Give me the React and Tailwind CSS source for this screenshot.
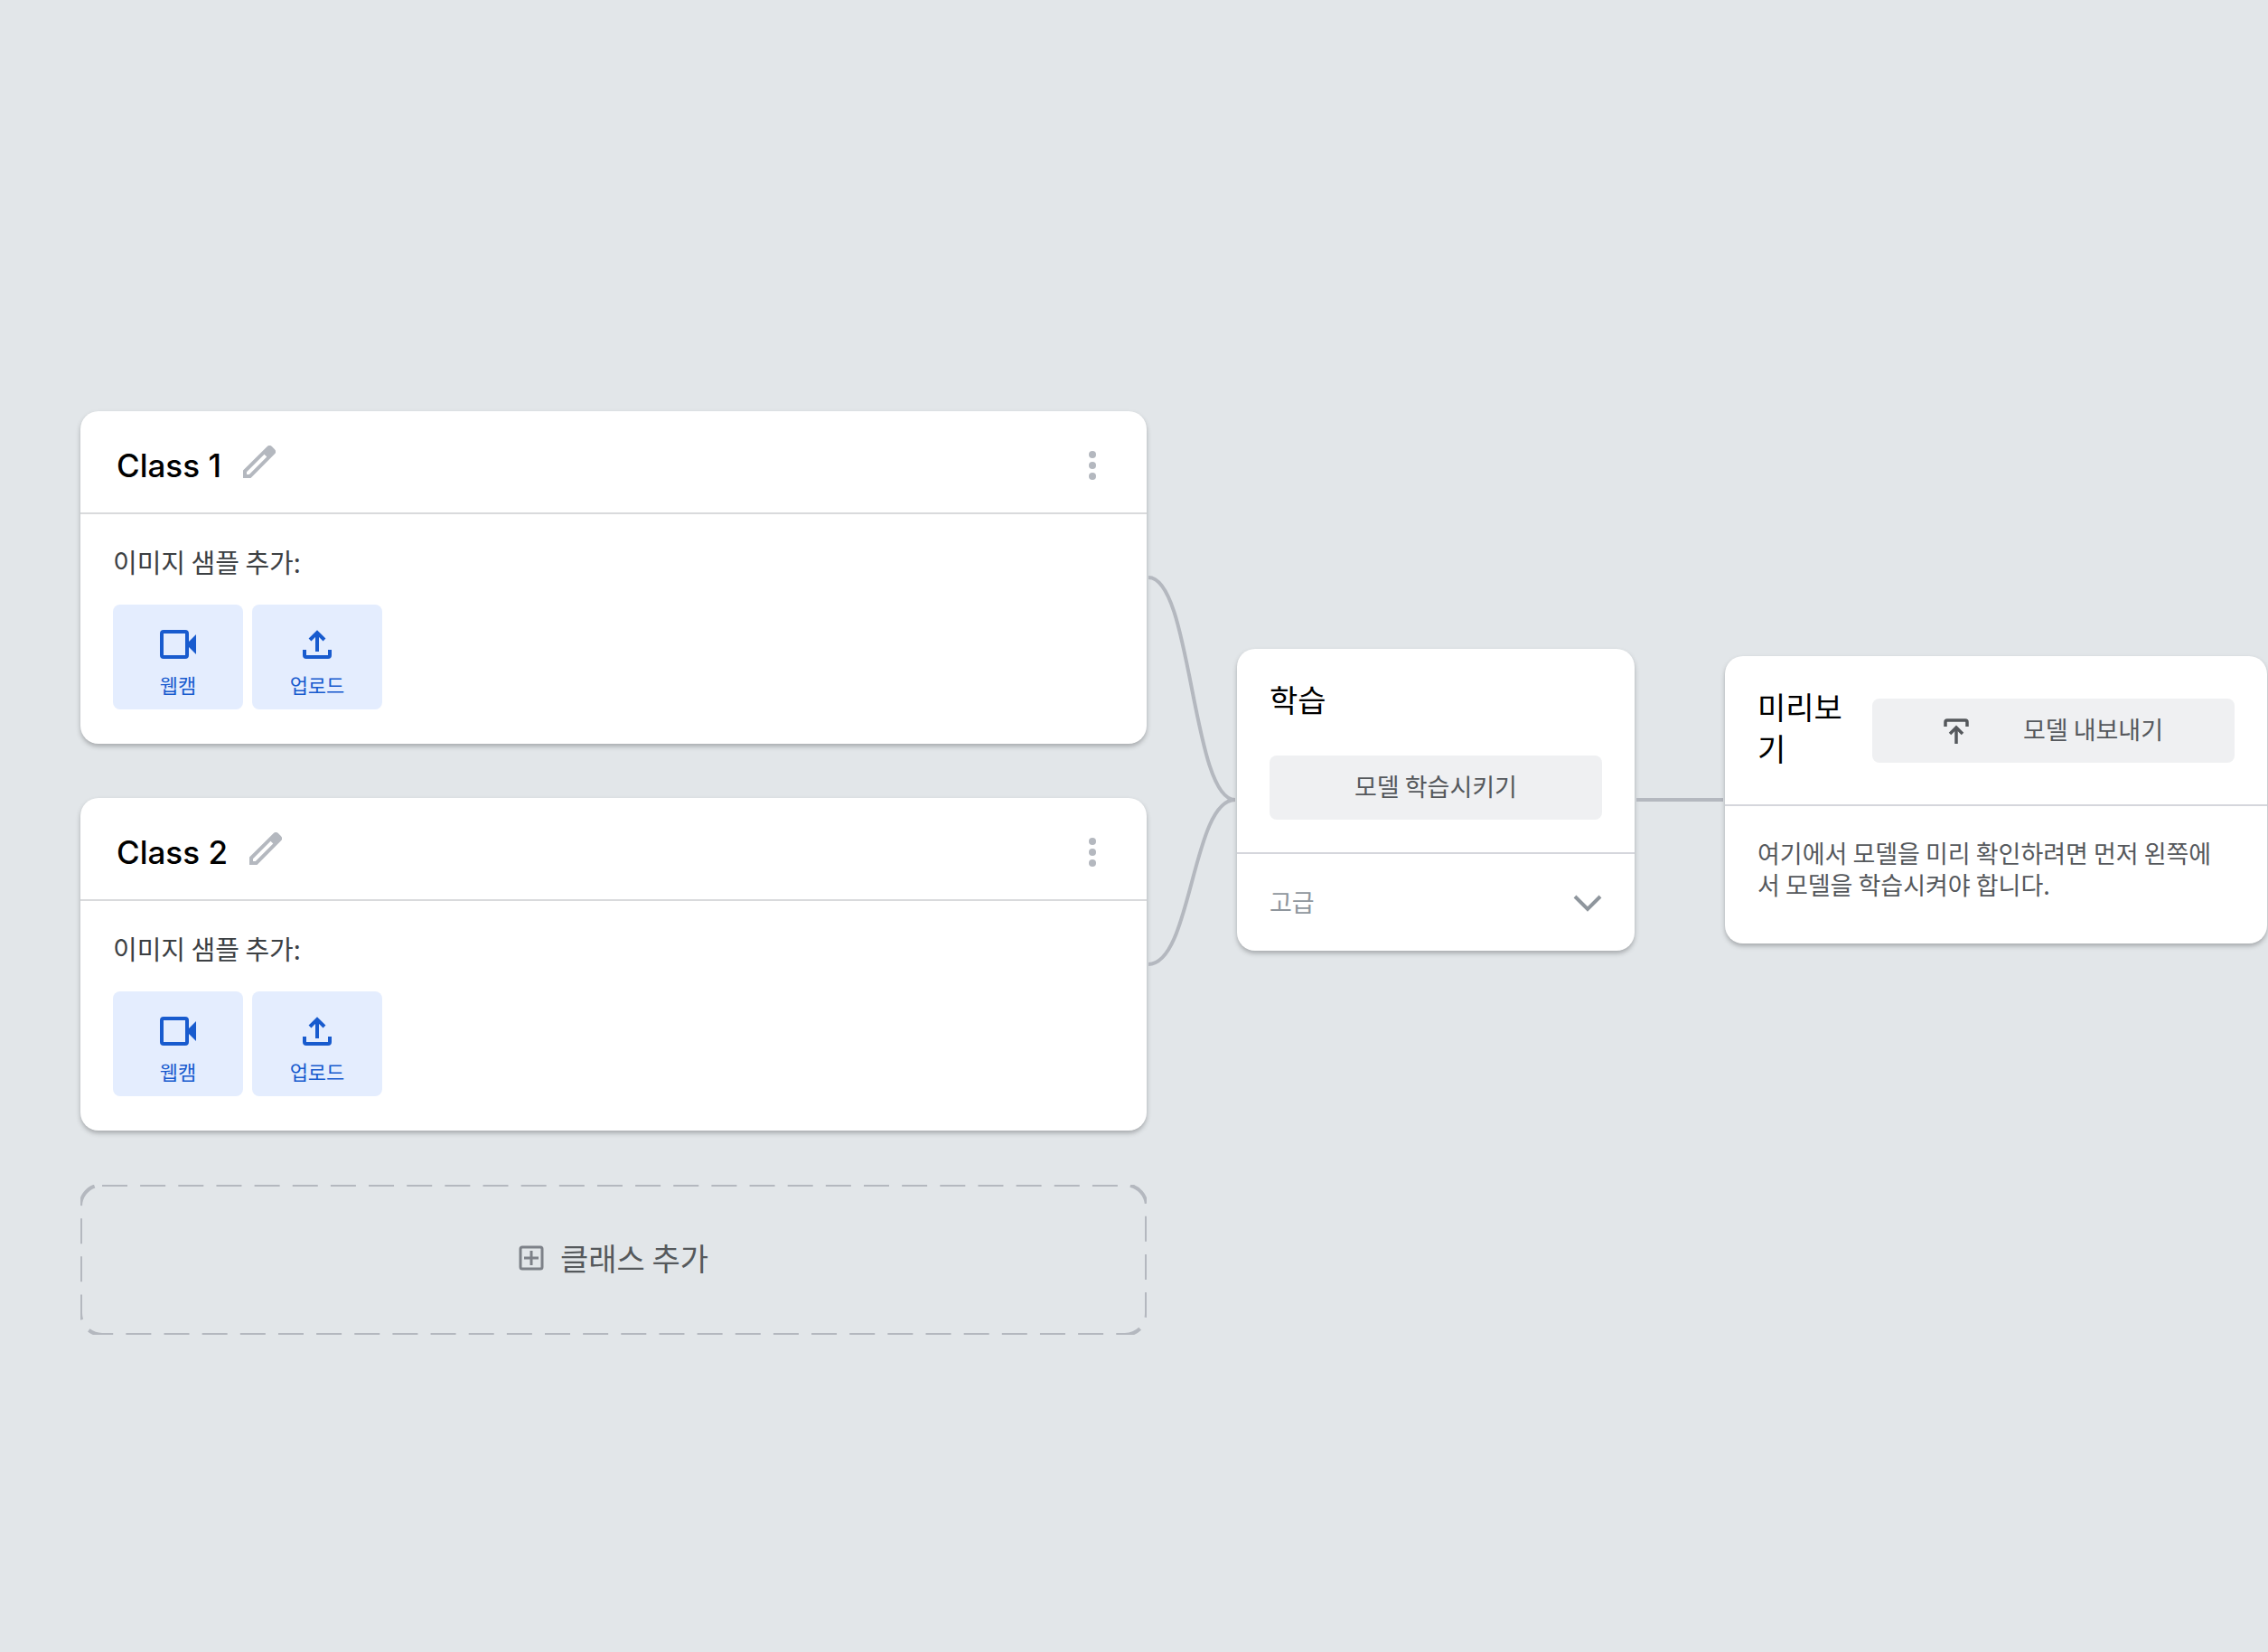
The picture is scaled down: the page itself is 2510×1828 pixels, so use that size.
const classes = [
  { id: 1, name: "Class 1" },
  { id: 2, name: "Class 2" },
];

function PencilIcon() {
  return (
    <svg width="36" height="36" viewBox="0 0 36 36" aria-hidden="true">
      <path
        fillRule="evenodd"
        fill="#b4b8bf"
        d="M0 27.500L26.500 1.200a4 4 0 0 1 5.600 0L34.800 3.900a4 4 0 0 1 0 5.600L8.500 36H0ZM4 29.200V32H6.800L26.300 12.500L23.500 9.700Z"
      />
    </svg>
  );
}

function MoreIcon() {
  return (
    <svg width="8" height="32" viewBox="0 0 8 32" fill="#b4b8bf" aria-hidden="true">
      <circle cx="4" cy="4" r="4" />
      <circle cx="4" cy="16" r="4" />
      <circle cx="4" cy="28" r="4" />
    </svg>
  );
}

function WebcamIcon() {
  return (
    <svg width="40" height="32" viewBox="0 0 40 32" aria-hidden="true">
      <rect x="2" y="2" width="28" height="28" rx="2" fill="none" stroke="#185bce" strokeWidth="4" />
      <path d="M31 14L40 5V27L31 18Z" fill="#185bce" />
    </svg>
  );
}

function UploadIcon() {
  return (
    <svg
      width="32"
      height="32"
      viewBox="0 0 32 32"
      fill="none"
      stroke="#185bce"
      strokeWidth="4"
      aria-hidden="true"
    >
      <path d="M2 22V28a2 2 0 0 0 2 2H28a2 2 0 0 0 2-2V22" />
      <path d="M16 24V4" />
      <path d="M8 11L16 3L24 11" />
    </svg>
  );
}

function ExportIcon() {
  return (
    <svg
      width="28"
      height="28"
      viewBox="0 0 28 28"
      fill="none"
      stroke="#55585c"
      strokeWidth="3.500"
      aria-hidden="true"
    >
      <path d="M2 9V4a2 2 0 0 1 2-2H24a2 2 0 0 1 2 2V9" />
      <path d="M14 28V11" />
      <path d="M7 17L14 10L21 17" />
    </svg>
  );
}

function AddBoxIcon() {
  return (
    <svg
      width="28"
      height="28"
      viewBox="0 0 28 28"
      fill="none"
      stroke="#7d8188"
      strokeWidth="3"
      aria-hidden="true"
    >
      <rect x="2" y="2" width="24" height="24" rx="2" />
      <path d="M14 6V22M6 14H22" />
    </svg>
  );
}

function Card({ className, children }) {
  return (
    <section
      className={`bg-white rounded-[20px] shadow-[0_3px_5px_rgba(60,64,67,0.35)] ${className || ""}`}
    >
      {children}
    </section>
  );
}

function SampleButton({ icon, label }) {
  return (
    <button
      type="button"
      className="w-36 h-[116px] pt-7 rounded-lg bg-[#e4edfe] text-[#185bce] flex flex-col items-center gap-3 hover:bg-[#d6e4fd]"
    >
      {icon}
      <span className="text-[22px] leading-8">{label}</span>
    </button>
  );
}

function ClassCard({ name }) {
  return (
    <Card>
      <div className="h-[114px] pl-10 pr-14 pt-2 flex items-center justify-between border-b-2 border-[#d9dadc]">
        <div className="flex items-start gap-6">
          <h2 className="font-[Inter,'Noto_Sans_CJK_KR',sans-serif] font-medium text-[35px] leading-[48px] text-black">
            {name}
          </h2>
          <button type="button" className="pt-0.5" aria-label={`${name} 이름 수정`}>
            <PencilIcon />
          </button>
        </div>
        <button type="button" aria-label={`${name} 메뉴`}>
          <MoreIcon />
        </button>
      </div>
      <div className="px-9 pt-[34px] pb-[38px]">
        <p className="text-[29px] leading-9 text-[#3c4043] mb-[30px]">이미지 샘플 추가:</p>
        <div className="flex gap-[10px]">
          <SampleButton icon={<WebcamIcon />} label="웹캠" />
          <SampleButton icon={<UploadIcon />} label="업로드" />
        </div>
      </div>
    </Card>
  );
}

function AddClassButton() {
  return (
    <button
      type="button"
      className="relative w-full h-[166px] pb-1 flex items-center justify-center gap-[18px] text-[34px] leading-[46px] text-[#55595c]"
    >
      {/* Dashed outline */}
      <svg className="absolute inset-0 w-full h-full" aria-hidden="true">
        <rect
          width="100%"
          height="100%"
          rx="24"
          fill="none"
          stroke="#b4b8bf"
          strokeWidth="4"
          strokeDasharray="28 14.15"
        />
      </svg>
      <AddBoxIcon />
      <span>클래스 추가</span>
    </button>
  );
}

function TrainingCard() {
  return (
    <Card className="w-[440px] shrink-0 mt-[263px]">
      <div className="px-9 pt-[33px] pb-9 border-b-2 border-[#d5d6dc]">
        <h2 className="text-[34px] leading-[46px] text-black">학습</h2>
        <button
          type="button"
          className="mt-[39px] w-full h-[71px] pb-1 rounded-lg bg-[#eff0f2] text-[27px] leading-9 text-[#55585c]"
        >
          모델 학습시키기
        </button>
      </div>
      <button
        type="button"
        className="w-full h-[107px] px-9 flex items-center justify-between text-[27px] leading-9 text-[#8f969d]"
      >
        <span className="pb-0.5">고급</span>
        <svg width="32" height="20" viewBox="0 0 32 20" fill="none" aria-hidden="true">
          <path d="M2 3L16 17L30 3" stroke="#8f969d" strokeWidth="4" />
        </svg>
      </button>
    </Card>
  );
}

function PreviewCard() {
  return (
    <Card className="w-[600px] shrink-0 mt-[271px]">
      <div className="px-9 pt-[33px] pb-[39px] flex items-start gap-[30px] border-b-2 border-[#d5d6dc]">
        <h2 className="flex-1 text-[34px] leading-[46px] text-black">미리보기</h2>
        <button
          type="button"
          className="mt-[14px] w-[401px] h-[71px] rounded-lg bg-[#eff0f2] flex items-center justify-center gap-[60px] text-[27px] leading-9 text-[#55585c]"
        >
          <ExportIcon />
          <span className="pb-1">모델 내보내기</span>
        </button>
      </div>
      <p className="pl-9 pr-12 pt-[34px] pb-12 text-[27px] leading-[35px] text-[#55585c]">
        여기에서 모델을 미리 확인하려면 먼저 왼쪽에서 모델을 학습시켜야 합니다.
      </p>
    </Card>
  );
}

export default function App() {
  return (
    <main className="min-h-screen bg-[#e2e6e9] pt-[455px] pl-[89px] pr-px flex items-start font-['Noto_Sans_CJK_KR',sans-serif]">
      <div className="flex-1 flex flex-col gap-[60px]">
        {classes.map((item) => (
          <ClassCard key={item.id} name={item.name} />
        ))}
        <AddClassButton />
      </div>

      {/* Classes -> training */}
      <svg
        className="shrink-0 mt-[184px] overflow-visible"
        width="100"
        height="428"
        viewBox="0 0 100 428"
        fill="none"
        stroke="#b4b8bf"
        strokeWidth="4"
        aria-hidden="true"
      >
        <path d="M2 0C50 0 50 246 98 246" />
        <path d="M2 428C50 428 50 246 98 246" />
      </svg>

      <TrainingCard />

      {/* Training -> preview */}
      <svg
        className="shrink-0 mt-[428px]"
        width="100"
        height="4"
        viewBox="0 0 100 4"
        aria-hidden="true"
      >
        <path d="M2 2H98" stroke="#b4b8bf" strokeWidth="4" />
      </svg>

      <PreviewCard />
    </main>
  );
}
